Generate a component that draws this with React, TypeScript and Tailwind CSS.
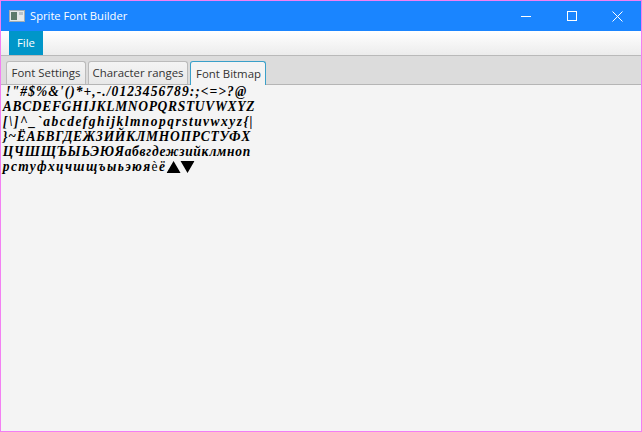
const rows = [
  { text: `!"#$%&'()*+,-./0123456789:;<=>?@`, pad: "pl-[5px]", track: "tracking-[1.18px]" },
  { text: "ABCDEFGHIJKLMNOPQRSTUVWXYZ", pad: "pl-0.5", track: "tracking-[0.75px]" },
  { text: "[\\]^_`abcdefghijklmnopqrstuvwxyz{|", pad: "pl-0.5", track: "tracking-[1.63px]" },
  { text: "}~ЁАБВГДЕЖЗИЙКЛМНОПРСТУФХ", pad: "pl-0.5", track: "tracking-[0.83px]" },
  { text: "ЦЧШЩЪЫЬЭЮЯабвгдежзийклмноп", pad: "pl-0.5", track: "tracking-[0.79px]" },
];

function MainWindow() {
  return (
    <div className="flex h-[432px] w-[642px] flex-col border border-[#f37ff3] bg-[#f4f4f4] font-['Open_Sans',sans-serif] text-[11.4px]">
      {/* title bar */}
      <div className="flex h-[30px] items-center bg-[#1a85ff] text-white">
        <svg width="16" height="16" viewBox="0 0 16 16" className="ml-[8px]">
          <rect x="0.5" y="2.5" width="15" height="11" fill="#e4e8ea" stroke="#a3adb3" />
          <rect x="2" y="4" width="6" height="8" fill="#5c7a6c" />
          <rect x="10" y="4" width="4" height="3" fill="#b9c3c9" />
        </svg>
        <span className="ml-[5px] text-[11.2px]">Sprite Font Builder</span>
        <div className="ml-auto flex items-center">
          <div className="h-px w-[10px] bg-white" />
          <div className="ml-[36px] h-[10px] w-[10px] border border-white" />
          <svg width="11" height="11" viewBox="0 0 11 11" className="ml-[35px] mr-[18px]">
            <path d="M0.5 0.5 L10.5 10.5 M10.5 0.5 L0.5 10.5" stroke="white" strokeWidth="1" fill="none" />
          </svg>
        </div>
      </div>
      {/* menu bar */}
      <div className="flex h-[25px] border-b border-[#b9b9b9] bg-gradient-to-b from-white to-[#ececec] pl-[8px]">
        <div className="flex h-[24px] w-[34px] items-center justify-center bg-[#0096c9] text-white">File</div>
      </div>
      {/* tabs */}
      <div className="flex h-[29px] items-end gap-[2px] border-b border-[#b5b5b5] bg-[#dcdcdc] pl-[5px] text-[#333]">
        <div className="flex h-[23px] w-[80px] items-center justify-center rounded-t-[3px] border border-b-0 border-[#bbb] bg-gradient-to-b from-[#f4f4f4] to-[#e8e8e8]">Font Settings</div>
        <div className="flex h-[23px] w-[100px] items-center justify-center rounded-t-[3px] border border-b-0 border-[#bbb] bg-gradient-to-b from-[#f4f4f4] to-[#e8e8e8]">Character ranges</div>
        <div className="-mb-px flex h-[24px] w-[76px] items-center justify-center rounded-t-[3px] border border-b-0 border-[#3aa0c9] bg-[#f4f4f4] pl-[1px]">Font Bitmap</div>
      </div>
      {/* bitmap preview: the glyphs in the sheet are a condensed cut, hence the scale */}
      <div className="-mt-px flex-1 font-['Liberation_Serif',serif] text-[15px] font-bold italic leading-[15px] text-black">
        {rows.map((r) => (
          <div key={r.text} className={`${r.pad} ${r.track} origin-left scale-x-[0.9] whitespace-pre`}>{r.text}</div>
        ))}
        <div className="flex h-[15px] origin-left scale-x-[0.9] items-center whitespace-pre pl-0.5 tracking-[1.48px]">
          <span>рстуфхцчшщъыьэюя</span>
          <span className="font-normal not-italic text-[15px]">è</span>
          <span>ё</span>
          <svg width="31" height="12" viewBox="0 0 28 12" preserveAspectRatio="none">
            <path d="M0 12 L7 0 L14 12 Z M14 0 L28 0 L21 12 Z" fill="#000" />
          </svg>
        </div>
      </div>
    </div>
  );
}

export default function App() {
  return <MainWindow />;
}
